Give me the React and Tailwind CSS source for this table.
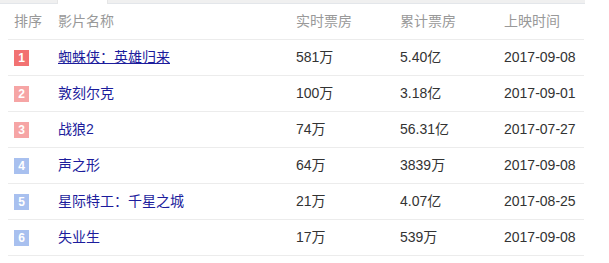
const movies = [
  { rank: 1, name: "蜘蛛侠：英雄归来", today: "581万", total: "5.40亿", date: "2017-09-08" },
  { rank: 2, name: "敦刻尔克", today: "100万", total: "3.18亿", date: "2017-09-01" },
  { rank: 3, name: "战狼2", today: "74万", total: "56.31亿", date: "2017-07-27" },
  { rank: 4, name: "声之形", today: "64万", total: "3839万", date: "2017-09-08" },
  { rank: 5, name: "星际特工：千星之城", today: "21万", total: "4.07亿", date: "2017-08-25" },
  { rank: 6, name: "失业生", today: "17万", total: "539万", date: "2017-09-08" },
];

function Badge({ rank }) {
  let color = "bg-[#a8c0ef]";
  if (rank === 1) color = "bg-[#f27272]";
  else if (rank <= 3) color = "bg-[#f6a5a5]";
  return (
    <span
      className={`flex h-[16px] w-[15px] items-center justify-center text-[12px] font-bold leading-none text-white ${color}`}
    >
      {rank}
    </span>
  );
}

export default function App() {
  return (
    <div
      className="h-[263px] w-[609px] bg-white text-[14px]"
      style={{ fontFamily: '"Liberation Sans", "Noto Sans CJK SC", sans-serif' }}
    >
      {/* tabs strip (cut off at top) */}
      <div className="flex h-[4px]">
        <div className="w-[57px] bg-[#f0f0f0] border-b border-[#e3e6ea]" />
        <div className="w-[51px] border-x border-[#e6e6e6] bg-white" />
        <div className="w-[477px] bg-[#f0f0f0] border-b border-[#e3e6ea]" />
      </div>

      <div className="ml-[8px] w-[576px]">
        {/* header */}
        <div className="grid h-[36px] grid-cols-[50px_238px_104px_104px_80px] items-center border-b border-[#ececec] text-[#999]">
          <span className="pl-[6px]">排序</span>
          <span>影片名称</span>
          <span>实时票房</span>
          <span>累计票房</span>
          <span>上映时间</span>
        </div>

        {movies.map((m) => (
          <div
            key={m.rank}
            className="grid h-[36px] grid-cols-[50px_238px_104px_104px_80px] items-center border-b border-[#ececec] text-[#333]"
          >
            <span className="pl-[6px]">
              <Badge rank={m.rank} />
            </span>
            <a
              href="#"
              className={`text-[#1c1c9c] ${m.rank === 1 ? "underline" : "no-underline"}`}
            >
              {m.name}
            </a>
            <span>{m.today}</span>
            <span>{m.total}</span>
            <span>{m.date}</span>
          </div>
        ))}
      </div>
    </div>
  );
}
